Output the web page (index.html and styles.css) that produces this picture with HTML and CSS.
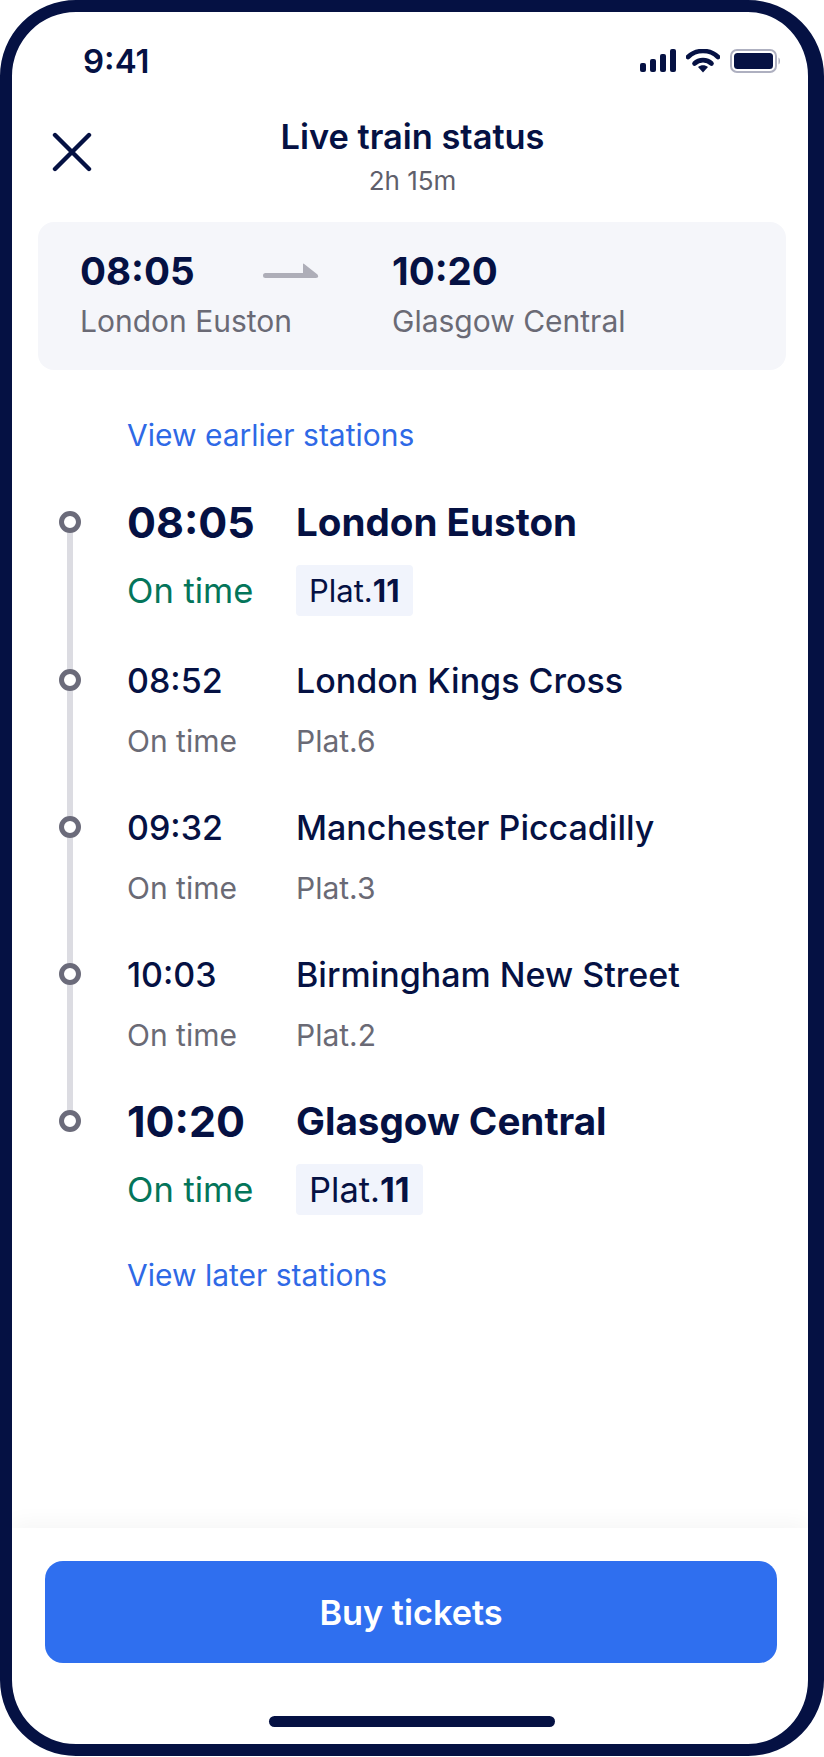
FILE: index.html
```html
<!DOCTYPE html>
<html lang="en">
  <head>
    <meta charset="UTF-8" />
    <meta name="viewport" content="width=device-width, initial-scale=1.0" />
    <title>Live train status</title>
    <link rel="stylesheet" href="styles.css">
  </head>
  <body>
    <div class="phone">
      <div class="status-bar">
        <span class="clock">9:41</span>
        <div class="status-icons">
          <svg width="37" height="24" viewBox="0 0 37 24">
            <rect x="0" y="14" width="6" height="9" rx="2" fill="#051143" />
            <rect x="10" y="10" width="6" height="13" rx="2" fill="#051143" />
            <rect x="20" y="5" width="6" height="18" rx="2" fill="#051143" />
            <rect x="30" y="0" width="6" height="23" rx="2" fill="#051143" />
          </svg>
          <svg width="34" height="24" viewBox="0 0 34 24">
            <path d="M2 8 C10 0 24 0 32 8" fill="none" stroke="#051143" stroke-width="4.6" stroke-linecap="round" />
            <path d="M8.5 14.5 C13 10 21 10 25.5 14.5" fill="none" stroke="#051143" stroke-width="4.6" stroke-linecap="round" />
            <path d="M12 18 L17 23.5 L22 18 C19 15.5 15 15.5 12 18 Z" fill="#051143" />
          </svg>
          <svg class="battery" width="51" height="24" viewBox="0 0 51 24">
            <rect x="1" y="1" width="45" height="22" rx="6" fill="none" stroke="#aeb0c0" stroke-width="2" />
            <rect x="4" y="4" width="39" height="16" rx="3.5" fill="#051143" />
            <path d="M48.5 8.5 C50.5 9.5 50.5 14.5 48.5 15.5 Z" fill="#aeb0c0" />
          </svg>
        </div>
      </div>

      <div class="header">
        <svg class="close-icon" width="40" height="40" viewBox="0 0 40 40">
          <path d="M3 3 L37 37 M37 3 L3 37" stroke="#051143" stroke-width="4.4" stroke-linecap="round" />
        </svg>
        <div class="title">Live train status</div>
        <div class="duration">2h 15m</div>
      </div>

      <div class="summary">
        <div class="summary-col">
          <div class="summary-time">08:05</div>
          <div class="summary-place">London Euston</div>
        </div>
        <svg class="summary-arrow" width="56" height="16" viewBox="0 0 56 16">
          <path d="M2.5 10 H40 V1.5 Q40 0 41.2 1 L54.5 11.5 Q56.5 15 53 15 H2.5 A2.5 2.5 0 0 1 2.5 10 Z" fill="#aeaeb8" />
        </svg>
        <div class="summary-col">
          <div class="summary-time">10:20</div>
          <div class="summary-place">Glasgow Central</div>
        </div>
      </div>

      <a class="link link-earlier">View earlier stations</a>

      <div class="stops">
        <div class="rail"></div>

        <div class="stop stop-main">
          <span class="dot"></span>
          <span class="time">08:05</span>
          <span class="station">London Euston</span>
          <span class="state">On time</span>
          <span class="plat">Plat.<b>11</b></span>
        </div>
        <div class="stop">
          <span class="dot"></span>
          <span class="time">08:52</span>
          <span class="station">London Kings Cross</span>
          <span class="state">On time</span>
          <span class="plat">Plat.6</span>
        </div>
        <div class="stop">
          <span class="dot"></span>
          <span class="time">09:32</span>
          <span class="station">Manchester Piccadilly</span>
          <span class="state">On time</span>
          <span class="plat">Plat.3</span>
        </div>
        <div class="stop">
          <span class="dot"></span>
          <span class="time">10:03</span>
          <span class="station">Birmingham New Street</span>
          <span class="state">On time</span>
          <span class="plat">Plat.2</span>
        </div>
        <div class="stop stop-main stop-last">
          <span class="dot"></span>
          <span class="time">10:20</span>
          <span class="station">Glasgow Central</span>
          <span class="state">On time</span>
          <span class="plat">Plat.<b>11</b></span>
        </div>
      </div>

      <a class="link link-later">View later stations</a>

      <div class="footer">
        <button class="buy" type="button">Buy tickets</button>
        <div class="home-bar"></div>
      </div>
    </div>
  </body>
</html>
```

FILE: styles.css
```css
* {
  padding: 0;
  margin: 0;
  box-sizing: border-box;
}
body {
  background: #fff;
  font-family: Inter, "Liberation Sans", sans-serif;
  color: #051143;
}

.phone {
  width: 824px;
  height: 1756px;
  border: 12px solid #051143;
  border-right-width: 16px;
  border-radius: 76px;
  background: #fff;
  display: flex;
  flex-direction: column;
  overflow: hidden;
}

/* status bar */
.status-bar {
  display: flex;
  justify-content: space-between;
  align-items: center;
  height: 24px;
  margin-top: 37px;
  padding: 0 27px 0 71px;
}
.clock {
  font-size: 33px;
  font-weight: 600;
  line-height: 24px;
}
.status-icons {
  display: flex;
  align-items: center;
  gap: 9px;
}
.battery {
  margin-left: 1px;
}

/* header */
.header {
  position: relative;
  text-align: center;
  margin-top: 43px;
  height: 106px;
  padding-left: 5px;
}
.close-icon {
  position: absolute;
  left: 40px;
  top: 16px;
}
.title {
  font-size: 34.4px;
  font-weight: 600;
  line-height: 42px;
}
.duration {
  font-size: 26px;
  line-height: 30px;
  margin-top: 8px;
  color: #5f5f6b;
}

/* summary card */
.summary {
  display: flex;
  align-items: flex-start;
  height: 148px;
  margin: 0 22px 0 26px;
  padding: 26px 43px 0 42px;
  background: #f5f6fa;
  border-radius: 16px;
}
.summary-col {
  width: 0;
  white-space: nowrap;
}
.summary-time {
  font-size: 38.6px;
  font-weight: 700;
  line-height: 46px;
}
.summary-place {
  font-size: 30px;
  line-height: 36px;
  margin-top: 9px;
  color: #6a6a75;
}
.summary-arrow {
  margin: 15px 73px 0 183px;
}

/* links */
.link {
  display: block;
  font-size: 30px;
  line-height: 36px;
  color: #2f69e6;
  margin-left: 115px;
}
.link-earlier {
  margin-top: 47px;
}
.link-later {
  margin-top: 46px;
}

/* timeline */
.stops {
  position: relative;
  margin-top: 47px;
}
.rail {
  position: absolute;
  left: 55px;
  top: 22px;
  bottom: 90px;
  width: 6px;
  background: #dcdce2;
}
.stop {
  position: relative;
  display: grid;
  grid-template-columns: 68px 169px 1fr;
  grid-template-rows: 44px 44px;
  row-gap: 17px;
  align-items: center;
  align-content: start;
  height: 147px;
  padding-left: 47px;
  white-space: nowrap;
}
.stop-main {
  row-gap: 24px;
  height: 158px;
}
.stop-last {
  height: 112px;
}
.dot {
  grid-column: 1;
  grid-row: 1;
  width: 22px;
  height: 22px;
  border: 5px solid #6b6b7a;
  border-radius: 50%;
  background: #fff;
}
.time {
  grid-column: 2;
  grid-row: 1;
  font-size: 34px;
  font-weight: 500;
}
.station {
  grid-column: 3;
  grid-row: 1;
  font-size: 34px;
  font-weight: 500;
}
.state {
  grid-column: 2;
  grid-row: 2;
  font-size: 30px;
  color: #6a6a75;
}
.plat {
  grid-column: 3;
  grid-row: 2;
  justify-self: start;
  font-size: 30px;
  color: #6a6a75;
}

.stop-main .time {
  font-size: 43px;
  font-weight: 700;
}
.stop-main .station {
  font-size: 38.6px;
  font-weight: 700;
}
.stop-main .state {
  font-size: 34.5px;
  color: #04755a;
}
.stop-main .plat {
  font-size: 31px;
  line-height: 51px;
  padding: 0 13px;
  background: #f1f4fc;
  border-radius: 4px;
  color: #051143;
}
.stop-last .plat {
  font-size: 34.5px;
}
.stop-main .plat b {
  font-weight: 700;
}

/* footer */
.footer {
  margin-top: auto;
  position: relative;
  height: 216px;
  padding: 33px 31px 0 33px;
  box-shadow: 0 -6px 20px rgba(0, 0, 0, 0.04);
}
.buy {
  display: block;
  width: 100%;
  height: 102px;
  border: 0;
  border-radius: 18px;
  background: #2f6fef;
  color: #fff;
  font-family: inherit;
  font-size: 34.3px;
  font-weight: 600;
}
.home-bar {
  width: 286px;
  height: 11px;
  border-radius: 6px;
  background: #051143;
  margin: 53px 0 0 224px;
}
```
